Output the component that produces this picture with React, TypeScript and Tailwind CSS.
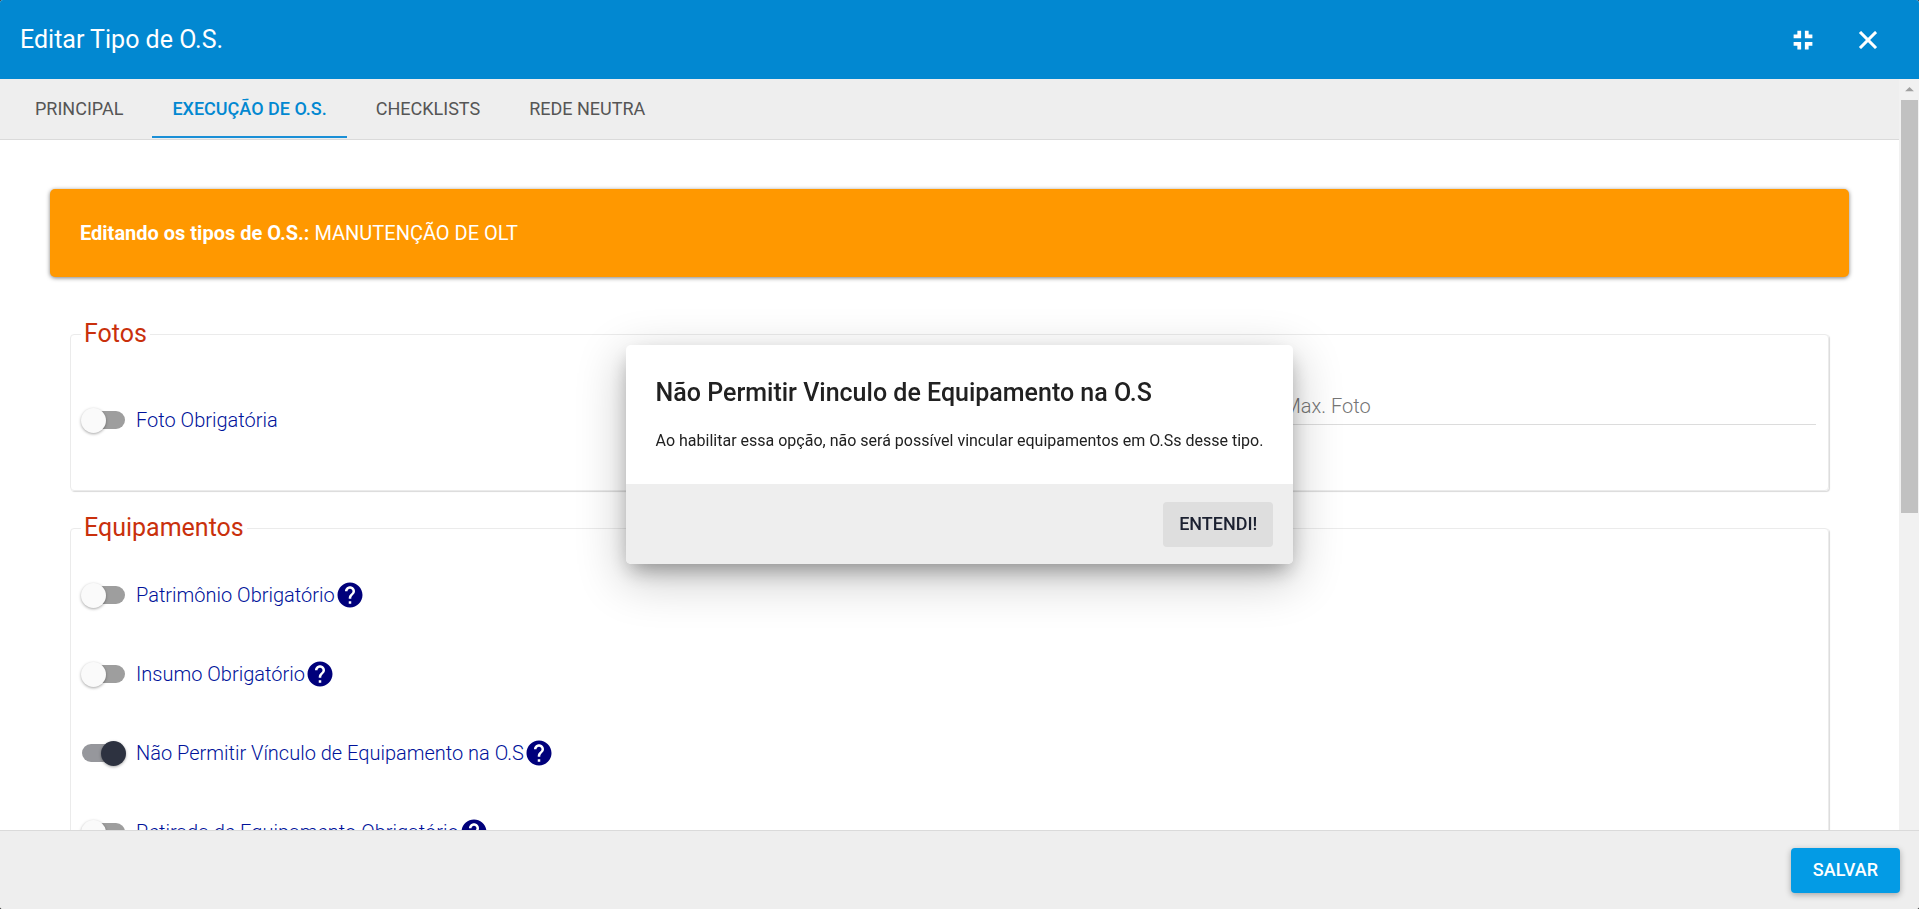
import { useState } from "react";
import { MdArrowDropUp, MdClose, MdFullscreenExit, MdHelp } from "react-icons/md";

const tabs: string[] = ["Principal", "Execução de O.S.", "Checklists", "Rede Neutra"];

const equipamentos = [
  { id: "patrimonio", label: "Patrimônio Obrigatório" },
  { id: "insumo", label: "Insumo Obrigatório" },
  { id: "vinculo", label: "Não Permitir Vínculo de Equipamento na O.S" },
  { id: "retirada", label: "Retirada de Equipamento Obrigatório" },
];

type SwitchProps = {
  id: string;
  label: string;
  checked: boolean;
  onChange: () => void;
};

const Switch = ({ id, label, checked, onChange }: SwitchProps) => (
  <label htmlFor={id} className="flex items-center gap-[10px] cursor-pointer text-xl font-light text-[#00129a]">
    <span className="relative flex h-[30px] w-[45px] items-center justify-center">
      <input id={id} type="checkbox" checked={checked} onChange={onChange} className="peer sr-only" />
      <span className="h-[18px] w-[43px] rounded-full bg-[#9e9e9e] peer-checked:bg-[#96979c]" />
      <span className="absolute left-0 size-[25px] rounded-full bg-[#fafafa] shadow-[0_1px_3px_rgba(0,0,0,0.35)] peer-checked:left-5 peer-checked:bg-[#2d3240]" />
    </span>
    {label}
  </label>
);

const App = () => {
  const [activeTab, setActiveTab] = useState(1);
  const [open, setOpen] = useState(true);
  const [enabled, setEnabled] = useState<string[]>(["vinculo"]);

  const toggle = (id: string) => {
    setEnabled((prev) => (prev.includes(id) ? prev.filter((item) => item !== id) : [...prev, id]));
  };

  return (
    <div className="h-screen bg-[#333] font-['Roboto',sans-serif]">
      <div className="flex h-full flex-col overflow-hidden rounded-[3px] bg-white">
        <header className="flex h-[79px] shrink-0 items-center bg-[#0288d1] px-5 text-white">
          <h1 className="flex-1 text-[25px]">Editar Tipo de O.S.</h1>
          <div className="flex gap-[35px] pr-4">
            <button type="button" aria-label="Sair da tela cheia">
              <MdFullscreenExit className="size-[30px] [&_path:last-child]:stroke-1" />
            </button>
            <button type="button" aria-label="Fechar">
              <MdClose className="size-[30px] [&_path:last-child]:stroke-[0.5]" />
            </button>
          </div>
        </header>

        <div className="flex min-h-0 flex-1">
          <main className="min-w-0 flex-1 overflow-hidden">
            <nav className="flex h-[61px] gap-[9px] border-b border-[#dadada] bg-[#eeeeee] pl-[15px]">
              {tabs.map((tab, index) => (
                <button
                  key={tab}
                  type="button"
                  onClick={() => setActiveTab(index)}
                  className={`mb-px border-b-2 px-5 pt-0.5 text-lg uppercase ${
                    index === activeTab
                      ? "border-[#1a8fd6] font-medium text-[#0288d1]"
                      : "border-transparent text-[#555555]"
                  }`}
                >
                  {tab}
                </button>
              ))}
            </nav>

            <div className="px-[50px] pt-[49px]">
              <div className="rounded-[5px] bg-[#ff9800] p-[30px] text-xl text-white shadow-[0_1px_4px_rgba(0,0,0,0.5)]">
                <strong className="font-bold">Editando os tipos de O.S.:</strong> MANUTENÇÃO DE OLT
              </div>

              <form className="px-5 pt-[41px]">
                <fieldset className="mb-[21px] rounded-[4px] border border-[#ebebeb] px-[10px] shadow-[1px_1px_1px_rgba(0,0,0,0.15)]">
                  <legend className="px-[3px] text-[25px] leading-8 text-[#c9300c]">Fotos</legend>
                  <div className="flex h-[140px] items-center justify-between">
                    <Switch
                      id="foto"
                      label="Foto Obrigatória"
                      checked={enabled.includes("foto")}
                      onChange={() => toggle("foto")}
                    />
                    <input
                      type="text"
                      aria-label="Max. Foto"
                      placeholder="Max. Foto"
                      className="mt-[38px] mr-[2px] h-[37px] w-[31%] self-start border-b border-[#dcdcdc] pl-[6px] text-xl font-light placeholder:text-[#757575]"
                    />
                  </div>
                </fieldset>

                <fieldset className="rounded-[4px] border border-[#ebebeb] px-[10px] shadow-[1px_1px_1px_rgba(0,0,0,0.15)]">
                  <legend className="px-[3px] text-[25px] leading-8 text-[#c9300c]">Equipamentos</legend>
                  <div className="flex flex-col gap-[49px] pt-9 pb-10">
                    {equipamentos.map((item) => (
                      <div key={item.id} className="flex items-center">
                        <Switch
                          id={item.id}
                          label={item.label}
                          checked={enabled.includes(item.id)}
                          onChange={() => toggle(item.id)}
                        />
                        <button type="button" aria-label="Ajuda" onClick={() => setOpen(true)}>
                          <MdHelp className="size-[30px] text-[#00007b]" />
                        </button>
                      </div>
                    ))}
                  </div>
                </fieldset>
              </form>
            </div>
          </main>

          {/* scrollbar */}
          <div className="flex w-5 shrink-0 flex-col items-center bg-[#f1f1f1]">
            <MdArrowDropUp className="size-[21px] shrink-0 text-[#a0a0a0]" />
            <div className="h-[55%] w-[17px] bg-[#c1c1c1]" />
          </div>
        </div>

        <footer className="flex h-[79px] shrink-0 items-center justify-end border-t border-[#dadada] bg-[#eeeeee] px-[19px]">
          <button
            type="button"
            className="h-[45px] rounded-[4px] bg-[#039be5] px-[22px] text-lg font-medium text-white shadow-[0_2px_6px_rgba(0,0,0,0.3)]"
          >
            SALVAR
          </button>
        </footer>
      </div>

      {open && (
        <div className="fixed inset-0 flex items-center justify-center">
          <div
            role="dialog"
            aria-labelledby="dialog-title"
            className="overflow-hidden rounded-[5px] bg-white shadow-[0_10px_20px_-5px_rgba(0,0,0,0.35),0_14px_48px_4px_rgba(0,0,0,0.2)]"
          >
            <div className="px-[30px] pt-[30px] pb-[29px]">
              <h2 id="dialog-title" className="mb-4 text-[25px] leading-9 font-medium text-[#212121]">
                Não Permitir Vinculo de Equipamento na O.S
              </h2>
              <p className="text-base leading-7 text-[#212121]">
                Ao habilitar essa opção, não será possível vincular equipamentos em O.Ss desse tipo.
              </p>
            </div>
            <div className="flex h-20 items-center justify-end bg-[#eeeeee] px-5">
              <button
                type="button"
                onClick={() => setOpen(false)}
                className="h-[45px] rounded-[4px] bg-[#dedede] px-4 text-lg font-medium text-[#1b2030]"
              >
                ENTENDI!
              </button>
            </div>
          </div>
        </div>
      )}
    </div>
  );
};

export default App;
